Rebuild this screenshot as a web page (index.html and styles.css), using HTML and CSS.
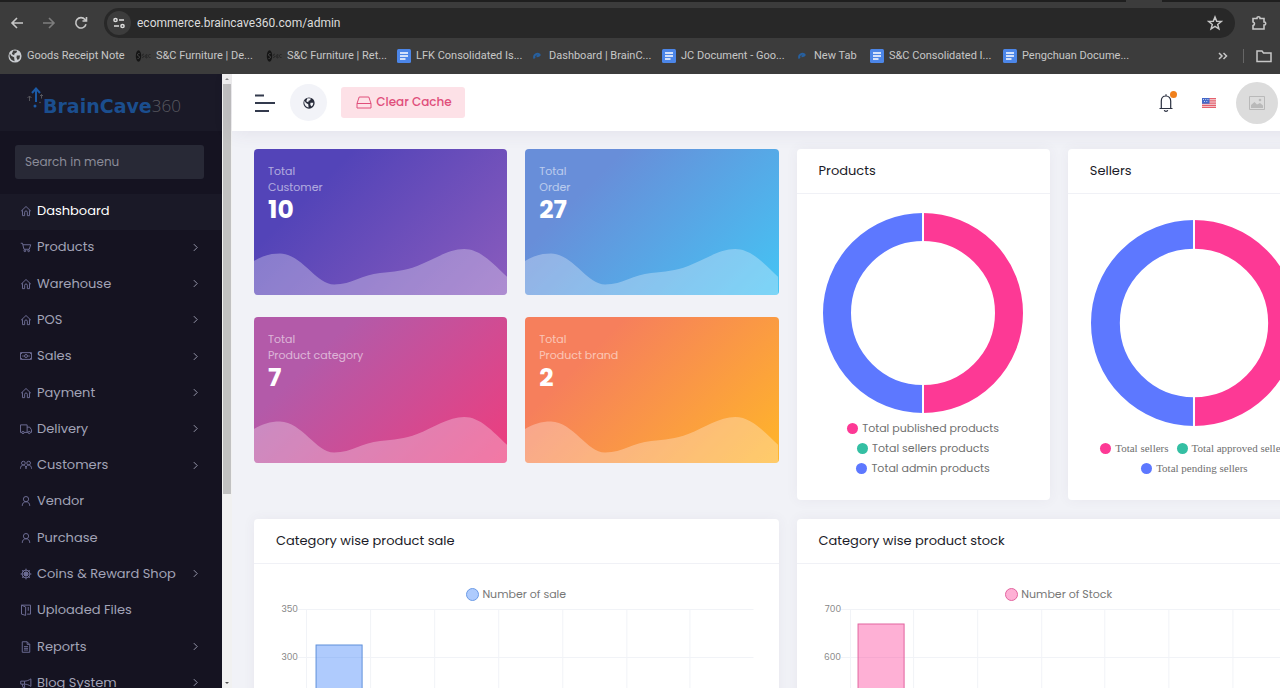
FILE: index.html
```html
<!DOCTYPE html>
<html lang="en">
<head>
<meta charset="utf-8">
<title>BrainCave360 Admin</title>
<link rel="stylesheet" href="styles.css">
</head>
<body>
<svg class="sprite" aria-hidden="true">
  <symbol id="home" viewBox="0 0 16 16"><path d="M1.5 8.2 8 2l6.500 6.200M3.300 7v7.200h2.900V9.600c0-1 .8-1.700 1.800-1.700s1.800.7 1.800 1.700v4.600h2.900V7"/></symbol>
  <symbol id="cart" viewBox="0 0 16 16"><path d="M1 3h2.300l2 8h7l2-6H4"/><circle cx="6.500" cy="13" r="1.200"/><circle cx="11.500" cy="13" r="1.200"/></symbol>
  <symbol id="cash" viewBox="0 0 16 16"><path d="M.7 3.500h14.600v9H.7zM.7 6 3 3.500M15.300 6 13 3.500M.7 10 3 12.500M15.300 10 13 12.500M3 8h2M11 8h2"/><circle cx="8" cy="8" r="2"/></symbol>
  <symbol id="truck" viewBox="0 0 16 16"><path d="M2.500 12.500H.7V2.500h8.800v10H5.500M9.500 5.500H13l2.300 3.500v3.500h-1.500M9.500 12.500h1.300"/><circle cx="4" cy="12.700" r="1.500"/><circle cx="12.300" cy="12.700" r="1.500"/></symbol>
  <symbol id="users" viewBox="0 0 16 16"><circle cx="4.500" cy="5.500" r="2.500"/><circle cx="11.500" cy="5.500" r="2.500"/><path d="M.6 13c0-3 1.500-5 3.900-5S8 10 8 13c0-3 1.200-5 3.500-5s3.900 2 3.900 5"/></symbol>
  <symbol id="user" viewBox="0 0 16 16"><circle cx="8" cy="5.500" r="3.500"/><path d="M3 14.500c0-3.500 2-5.500 5-5.500s5 2 5 5.500"/></symbol>
  <symbol id="wheel" viewBox="0 0 16 16"><circle cx="8" cy="8" r="5.300"/><circle cx="8" cy="8" r="2.200"/><path d="M8 .8v14.400M.8 8h14.400M2.900 2.900l10.200 10.200M13.100 2.900 2.900 13.100"/></symbol>
  <symbol id="files" viewBox="0 0 16 16"><path d="M2 1.500h12v12H9.500M2 1.500v12l5.500 1.700V4L2 1.500M11 4v5"/></symbol>
  <symbol id="report" viewBox="0 0 16 16"><path d="M3 1h6.500L13 4.500V15H3zM9.500 1v3.500H13M5.300 7.500h5.400M5.300 9.800h5.400M5.300 12h5.400"/></symbol>
  <symbol id="horn" viewBox="0 0 16 16"><path d="M1 5.500h5c3 0 5.500-1 8.500-3v10c-3-2-5.500-3-8.500-3H1zM6 5.500v4M3 9.500l1 4.500h2.500l-1-4.500"/></symbol>
  <symbol id="chev" viewBox="0 0 16 16"><path d="m5 2 6 6-6 6"/></symbol>
  <symbol id="globe" viewBox="0 0 16 16"><circle cx="8" cy="8" r="7.500" fill="currentColor" stroke="none"/><path class="land" stroke="none" d="M2 5 4 8l3 1.500.5 4.500C4.500 13.500 2 11 1.700 8zM6 1.800 10.500 1.900 9.500 4.300 7.500 5 7 7 4.300 5.800zM10 7.500 13.800 7.500 13 11 11 12.500 9.700 10z"/></symbol>
  <symbol id="doc" viewBox="0 0 14 14"><rect width="14" height="14" rx="1.500" fill="#4c86e8" stroke="none"/><path stroke="#fff" stroke-width="1.500" d="M3 4h8M3 7h8M3 10h5.500"/></symbol>
  <symbol id="swoosh" viewBox="0 0 14 14"><path stroke="#27609f" stroke-width="2" d="M4.500 9.500C3 6 7 3.500 9.500 5.500c.8 1-1 1.500-3 1.700"/></symbol>
  <symbol id="snc" viewBox="0 0 16 16"><ellipse cx="3.500" cy="8" rx="2.700" ry="5.800" fill="#151515" stroke="none"/><path stroke="#454545" d="M4.500 5.500C2 5 2 8 3.500 8s1.500 3-1 2.500"/><path stroke="#262626" d="M9 6.300c-2-.5-2 1.400-1 1.600s1 2-1 1.500M12 10c-3-.5-2-3-.5-3.500S10 9 12.500 9.500M15.500 6.500c-3-.5-3 3.500 0 3"/></symbol>
  <symbol id="wave" viewBox="0 0 253 49" preserveAspectRatio="none"><path fill="#fff" fill-opacity=".3" stroke="none" d="M0 15C8 10 16 7.500 26 7.500 48 8 62 38.500 80 38.500c18 0 28-10 46-11.500 14-1.500 24-2 37-7 17-6.500 31-17 47-17s28 14 43 28v18H0z"/></symbol>
</svg>

<header class="browser">
  <div class="tabstrip"><span class="tab"></span></div>
  <div class="toolbar">
    <button class="tool" aria-label="Back"><svg class="ico16" viewBox="0 0 16 16"><path d="M14 8H3M8 3 3 8l5 5"/></svg></button>
    <button class="tool dim" aria-label="Forward"><svg class="ico16" viewBox="0 0 16 16"><path d="M2 8h11M8 3l5 5-5 5"/></svg></button>
    <button class="tool" aria-label="Reload"><svg class="ico16" viewBox="0 0 16 16"><path d="M13 9.300A5.200 5.200 0 1 1 12 4.500l1.300 1.300M13.500 2v4h-4"/></svg></button>
    <div class="omnibox">
      <button class="site" aria-label="Site information"><svg class="ico14" viewBox="0 0 14 14"><circle cx="3.500" cy="4" r="1.600"/><path d="M7 4h5M2 10h5"/><circle cx="10.500" cy="10" r="1.600"/></svg></button>
      <input class="url" aria-label="Address" value="ecommerce.braincave360.com/admin">
      <button class="star" aria-label="Bookmark"><svg class="ico16" viewBox="0 0 16 16"><path d="m8 2 1.700 4.200 4.500.3-3.500 2.900 1.200 4.400L8 11.400l-3.900 2.400 1.200-4.400L1.800 6.500l4.500-.3z"/></svg></button>
    </div>
    <button class="tool ext" aria-label="Extensions"><svg class="ico16" viewBox="0 0 16 16"><path d="M2 3.500h4V2.800a1.500 1 0 0 1 3 0v.7h4V7h.4a1.300 1.500 0 0 1 0 3H13v4H2v-3.500c2-.5 2-3 0-3.500z"/></svg></button>
  </div>
  <nav class="bookmarks" aria-label="Bookmarks">
    <a href="#"><svg class="ico14 light"><use href="#globe"/></svg>Goods Receipt Note</a>
    <a href="#"><svg class="ico16"><use href="#snc"/></svg>S&amp;C Furniture | De...</a>
    <a href="#"><svg class="ico16"><use href="#snc"/></svg>S&amp;C Furniture | Ret...</a>
    <a href="#"><svg class="ico14"><use href="#doc"/></svg>LFK Consolidated Is...</a>
    <a href="#"><svg class="ico14"><use href="#swoosh"/></svg>Dashboard | BrainC...</a>
    <a href="#"><svg class="ico14"><use href="#doc"/></svg>JC Document - Goo...</a>
    <a href="#"><svg class="ico14"><use href="#swoosh"/></svg>New Tab</a>
    <a href="#"><svg class="ico14"><use href="#doc"/></svg>S&amp;C Consolidated I...</a>
    <a href="#"><svg class="ico14"><use href="#doc"/></svg>Pengchuan Docume...</a>
    <div class="more">
      <button class="tool small" aria-label="More bookmarks"><svg class="ico14" viewBox="0 0 14 14"><path d="m3 4 3 3-3 3M7.500 4l3 3-3 3"/></svg></button>
      <span class="rule"></span>
      <button class="tool small" aria-label="All bookmarks"><svg class="ico16" viewBox="0 0 16 16"><path d="M1 3h5l1.500 2H15v8.500H1z"/></svg></button>
    </div>
  </nav>
</header>

<div class="app">
  <aside class="sidebar">
    <a class="logo" href="#">
      <svg class="mark" viewBox="0 0 16 22"><path stroke="#1c5aa6" stroke-width="2" d="M9 15V2M5 6l4-4.500L13 6"/><circle cx="8" cy="19" r="1.500" fill="#1c5aa6" stroke="none"/><path stroke="#55555c" d="M2.500 14v-5M.5 11l2-2 2 2M14.500 11.500V7.500M13 9l1.500-1.500L16 9"/><circle cx="13" cy="15.500" r=".8" fill="#55555c" stroke="none"/></svg>
      <span class="brand">BrainCave</span><span class="num">360</span>
    </a>
    <input class="search" type="search" placeholder="Search in menu" aria-label="Search in menu">
    <ul class="menu">
      <li><a class="active" href="#"><svg class="mi"><use href="#home"/></svg>Dashboard</a></li>
      <li><a href="#"><svg class="mi"><use href="#cart"/></svg>Products<svg class="chev"><use href="#chev"/></svg></a></li>
      <li><a href="#"><svg class="mi"><use href="#home"/></svg>Warehouse<svg class="chev"><use href="#chev"/></svg></a></li>
      <li><a href="#"><svg class="mi"><use href="#home"/></svg>POS<svg class="chev"><use href="#chev"/></svg></a></li>
      <li><a href="#"><svg class="mi"><use href="#cash"/></svg>Sales<svg class="chev"><use href="#chev"/></svg></a></li>
      <li><a href="#"><svg class="mi"><use href="#home"/></svg>Payment<svg class="chev"><use href="#chev"/></svg></a></li>
      <li><a href="#"><svg class="mi"><use href="#truck"/></svg>Delivery<svg class="chev"><use href="#chev"/></svg></a></li>
      <li><a href="#"><svg class="mi"><use href="#users"/></svg>Customers<svg class="chev"><use href="#chev"/></svg></a></li>
      <li><a href="#"><svg class="mi"><use href="#user"/></svg>Vendor</a></li>
      <li><a href="#"><svg class="mi"><use href="#user"/></svg>Purchase</a></li>
      <li><a href="#"><svg class="mi"><use href="#wheel"/></svg>Coins &amp; Reward Shop<svg class="chev"><use href="#chev"/></svg></a></li>
      <li><a href="#"><svg class="mi"><use href="#files"/></svg>Uploaded Files</a></li>
      <li><a href="#"><svg class="mi"><use href="#report"/></svg>Reports<svg class="chev"><use href="#chev"/></svg></a></li>
      <li><a href="#"><svg class="mi"><use href="#horn"/></svg>Blog System<svg class="chev"><use href="#chev"/></svg></a></li>
    </ul>
  </aside>
  <div class="scrollbar" aria-hidden="true">
    <svg class="arrow" viewBox="0 0 10 10"><path d="M3 6h4L5 4z"/></svg>
    <div class="track"><div class="thumb"></div></div>
    <svg class="arrow dark" viewBox="0 0 10 10"><path d="M3 4h4L5 6z"/></svg>
  </div>

  <main class="main">
    <div class="topbar">
      <button class="burger" aria-label="Toggle menu"><svg viewBox="0 0 22 18"><path d="M1 1.500h9M1 9h20M1 17h14"/></svg></button>
      <button class="round" aria-label="Browse website"><svg class="ico12"><use href="#globe"/></svg></button>
      <button class="clear"><svg class="ico16" viewBox="0 0 16 14"><path d="M1 8.500 3.200 2h9.600L15 8.500V13H1zM1 8.500h14"/></svg>Clear Cache</button>
      <div class="right">
        <button class="bell" aria-label="Notifications"><svg viewBox="0 0 16 20"><path d="M1.500 15.500h13M3.300 15.500V8c0-3 2-5 4.700-5s4.700 2 4.700 5v7.500M8 3V1.300M6.300 17.200c.3 1.600 3.100 1.600 3.400 0"/></svg><span class="dot"></span></button>
        <button class="flag" aria-label="Language: English"><svg viewBox="0 0 14 10"><path fill="#f3dfe3" d="M0 0h14v10H0z"/><path fill="#e5606c" d="M0 0h14v1.200H0zM0 2.300h14v1.200H0zM0 4.500h14v1.200H0zM0 6.700h14v1.200H0zM0 8.800h14V10H0z"/><path fill="#4468c8" d="M0 0h7.500v5.700H0z"/><path fill="#c4d1f2" d="M1 1h1v1H1zM3.200 1h1v1h-1zM5.400 1h1v1h-1zM2 3h1v1H2zM4.300 3h1v1h-1z"/></svg></button>
        <button class="avatar" aria-label="Account"><svg viewBox="0 0 16 14"><path stroke="#b9b9b9" d="M.5.5h15v13H.5z"/><path fill="#b9b9b9" d="M2 12V9l3.500-3 2.500 2.500L11 7l3 2.500V12z"/><circle cx="11" cy="4" r="1.300" fill="#b9b9b9"/></svg></button>
      </div>
    </div>

    <div class="dash">
      <section class="stats">
        <article class="stat customer"><p>Total<br>Customer</p><strong>10</strong><svg class="wave"><use href="#wave"/></svg></article>
        <article class="stat order"><p>Total<br>Order</p><strong>27</strong><svg class="wave"><use href="#wave"/></svg></article>
        <article class="stat category"><p>Total<br>Product category</p><strong>7</strong><svg class="wave"><use href="#wave"/></svg></article>
        <article class="stat brandcard"><p>Total<br>Product brand</p><strong>2</strong><svg class="wave"><use href="#wave"/></svg></article>
      </section>
      <section class="donuts">
        <article class="card">
          <h2>Products</h2>
          <svg class="donut" viewBox="0 0 200 200"><circle class="pink" cx="100" cy="100" r="86" stroke-width="28" pathLength="100" stroke-dasharray="50 50" stroke-dashoffset="25"/><circle class="blue" cx="100" cy="100" r="86" stroke-width="28" pathLength="100" stroke-dasharray="50 50" stroke-dashoffset="75"/><path class="split" d="M100 0v30M100 170v30"/></svg>
          <ul class="legend stack">
            <li><i class="k pinkbg"></i>Total published products</li>
            <li><i class="k greenbg"></i>Total sellers products</li>
            <li><i class="k bluebg"></i>Total admin products</li>
          </ul>
        </article>
        <article class="card">
          <h2>Sellers</h2>
          <svg class="donut big" viewBox="0 0 200 200"><circle class="pink" cx="100" cy="100" r="86" stroke-width="28" pathLength="100" stroke-dasharray="50 50" stroke-dashoffset="25"/><circle class="blue" cx="100" cy="100" r="86" stroke-width="28" pathLength="100" stroke-dasharray="50 50" stroke-dashoffset="75"/><path class="split" d="M100 0v30M100 170v30"/></svg>
          <ul class="legend serif">
            <li><i class="k pinkbg"></i>Total sellers</li>
            <li><i class="k greenbg"></i>Total approved sellers</li>
            <li><i class="k bluebg"></i>Total pending sellers</li>
          </ul>
        </article>
      </section>

      <section class="card chart">
        <h2>Category wise product sale</h2>
        <p class="key"><i class="ring sale"></i>Number of sale</p>
        <svg class="plot" viewBox="0 0 480 160"><path class="grid" d="M22 6.500h455M22 54.500h455M22 102.500h455M22 150.500h455M30.500 6v154M94.500 6v154M158.500 6v154M222.500 6v154M286.500 6v154M350.500 6v154M413.500 6v154"/><path class="bar sale" d="M40 160V42h46v118"/><text x="22" y="9">350</text><text x="22" y="57">300</text></svg>
      </section>
      <section class="card chart">
        <h2>Category wise product stock</h2>
        <p class="key"><i class="ring stock"></i>Number of Stock</p>
        <svg class="plot" viewBox="0 0 480 160"><path class="grid" d="M22 6.500h458M22 54.500h458M22 102.500h458M22 150.500h458M31.500 6v154M94.500 6v154M158.500 6v154M222.500 6v154M285.500 6v154M349.500 6v154M413.500 6v154"/><path class="bar stock" d="M39 160V21h46v139"/><text x="22" y="9">700</text><text x="22" y="57">600</text></svg>
      </section>
    </div>
  </main>
</div>
</body>
</html>
```

FILE: styles.css
```css
* { box-sizing: border-box; }
body { margin: 0; height: 100vh; overflow: hidden; display: flex; flex-direction: column; font: 13px/16px Poppins, Inter, sans-serif; background: #f1f2f7; }
button { border: 0; padding: 0; background: none; font: inherit; color: inherit; display: flex; align-items: center; justify-content: center; cursor: pointer; flex: none; }
a { color: inherit; text-decoration: none; }
ul { list-style: none; margin: 0; padding: 0; }
p, h2 { margin: 0; font-weight: 400; }
svg { fill: none; stroke: currentColor; flex: none; }
.sprite { display: none; }
.ico12 { width: 12px; height: 12px; }
.ico14 { width: 14px; height: 14px; }
.ico16 { width: 16px; height: 16px; }

/* Browser chrome */
.browser { flex: none; background: #3c3c3c; color: #c7c7c7; font-family: Roboto, sans-serif; }
.tabstrip { height: 2px; background: #1f1f1f; display: flex; justify-content: flex-end; padding-right: 118px; }
.tab { width: 36px; background: #3c3c3c; }
.toolbar { display: flex; align-items: center; padding: 6px 0 0 8px; }
.tool { width: 32px; height: 30px; padding-right: 14px; }
.tool svg { stroke-width: 1.6; }
.tool.dim { color: #7d7d7d; }
.tool.ext { width: 45px; padding: 0 0 0 3px; }
.omnibox { flex: 1; height: 30px; border-radius: 15px; background: #282828; display: flex; align-items: center; padding: 0 12px 0 3px; }
.site { width: 24px; height: 24px; border-radius: 12px; background: #3c3c3c; color: #dedede; }
.site svg, .star svg { stroke-width: 1.5; }
.url { flex: 1; min-width: 0; border: 0; background: none; outline: 0; padding: 0 6px; color: #dcdcdc; font: 12px/20px Roboto, sans-serif; }
.bookmarks { display: grid; grid-template-columns: 127px 131px 131px 133px 132px 133px 75px 133px 160px 1fr; align-items: center; height: 36px; padding-left: 8px; font-size: 11px; white-space: nowrap; }
.bookmarks a { display: flex; align-items: center; gap: 5px; }
.light { color: #c9ccd0; }
.land { fill: var(--land, #3c3c3c); }
.more { display: flex; justify-content: flex-end; align-items: center; gap: 12px; padding-right: 8px; }
.tool.small { width: 16px; padding: 0; }
.tool.small svg { stroke-width: 1.5; }
.rule { width: 1px; height: 14px; background: #666; }

/* App frame */
.app { flex: 1; min-height: 0; display: flex; overflow: hidden; }
.sidebar { flex: none; width: 222px; background: #151321; color: #a2a3b7; overflow: hidden; display: flex; flex-direction: column; }
.logo { flex: none; height: 57px; background: #1a1927; display: flex; align-items: center; padding: 0 0 0 27px; }
.mark { width: 16px; height: 22px; margin-bottom: 10px; }
.brand { font: bold 19px/20px "DejaVu Sans", sans-serif; color: #1b4e8e; margin-top: 6px; }
.num { font: 300 17px/20px "Open Sans", sans-serif; color: #5b5b62; margin-top: 6px; }
.search { flex: none; margin: 14px 18px 15px 15px; height: 34px; border: 0; border-radius: 3px; background: #282936; padding: 0 10px; font: 12px/16px Poppins, Inter, sans-serif; color: #ccc; }
.search::placeholder { color: #8a8b98; }
.menu { flex: none; height: 508px; display: grid; grid-auto-rows: 1fr; }
.menu a { height: 100%; display: flex; align-items: center; gap: 5px; padding: 0 22px 2px 20px; }
.menu a.active { background: #1a1927; color: #fff; }
.mi { width: 12px; height: 12px; color: #6d6d94; stroke-width: 1.3; }
.chev { width: 9px; height: 9px; margin-left: auto; stroke-width: 1.6; }
.scrollbar { flex: none; width: 10px; background: #f1f1f1; display: flex; flex-direction: column; }
.arrow { width: 10px; height: 10px; fill: #8b8b8b; stroke: none; }
.arrow.dark { fill: #505050; }
.track { flex: 1; padding: 0 1px; }
.thumb { height: 69%; background: #c1c1c1; }
.main { flex: 1 0 1111px; }

/* Top bar */
.topbar { height: 57px; background: #fff; display: flex; align-items: center; padding: 0 65px 0 22px; box-shadow: 0 0 20px rgba(82, 63, 105, .1); position: relative; }
.burger svg { width: 22px; height: 18px; stroke: #333a4d; stroke-width: 2; }
.round { width: 37px; height: 37px; border-radius: 50%; background: #f2f3f8; margin: 0 14px; color: #272b3a; --land: #f2f3f8; }
.clear { width: 124px; height: 31px; gap: 4px; padding: 0 0 2px 2px; border-radius: 3px; background: #fde1e7; color: #e04e7b; font-size: 12px; font-weight: 500; }
.right { margin-left: auto; display: flex; align-items: center; gap: 26px; }
.bell { position: relative; }
.bell svg { width: 16px; height: 20px; stroke: #2b3040; stroke-width: 1.2; }
.dot { position: absolute; right: -3px; top: -2px; width: 7px; height: 7px; border-radius: 50%; background: #f0801c; }
.flag { margin-left: 2px; }
.flag svg { width: 14px; height: 10px; stroke: none; }
.avatar { width: 42px; height: 42px; border-radius: 50%; background: #dcdcdc; margin-left: -6px; }
.avatar svg { width: 16px; height: 14px; stroke: none; }

/* Dashboard */
.dash { display: grid; grid-template-columns: 1fr 1fr; gap: 19px 18px; padding: 18px 22px; }
.stats, .donuts { display: grid; grid-template-columns: 1fr 1fr; column-gap: 18px; }
.stats { row-gap: 22px; align-content: start; }
.stat { position: relative; height: 146px; border-radius: 4px; overflow: hidden; padding: 14px; color: #fff; }
.stat p { font-size: 11px; opacity: .55; }
.stat strong { display: block; font-size: 25px; line-height: 30px; font-weight: 700; }
.customer { background: linear-gradient(135deg, #5344b8 25%, #8b5cbd); }
.order { background: linear-gradient(135deg, #688ed9 25%, #44c4f4); }
.category { background: linear-gradient(135deg, #b35aa9 25%, #ee3d7d); }
.brandcard { background: linear-gradient(135deg, #f67f5c 25%, #ffb629); }
.wave { position: absolute; left: 0; bottom: 0; width: 100%; height: 49px; }
.card { background: #fff; border-radius: 4px; box-shadow: 0 0 13px rgba(82, 63, 105, .06); overflow: hidden; display: flex; flex-direction: column; align-items: center; }
.donuts .card { min-height: 351px; }
.card h2 { align-self: stretch; height: 45px; line-height: 44px; padding: 0 22px; border-bottom: 1px solid #f0f1f6; color: #1b1b28; font-size: 13px; }
.donut { width: 200px; height: 200px; margin: 19px 0 5px; }
.donut.big { width: 206px; height: 206px; margin: 26px 0 12px; }
.pink { stroke: #fd3995; }
.blue { stroke: #5d78ff; }
.split { stroke: #fff; stroke-width: 2; }
.legend { display: flex; flex-wrap: wrap; justify-content: center; column-gap: 8px; color: #6f6f6f; font-size: 11px; line-height: 20px; white-space: nowrap; }
.legend li { display: flex; align-items: center; gap: 4px; }
.legend.stack { flex-direction: column; align-items: center; }
.legend.serif { font-family: "Liberation Serif", serif; }
.k { width: 11px; height: 11px; border-radius: 50%; }
.pinkbg { background: #fd3995; }
.greenbg { background: #34bfa3; }
.bluebg { background: #5d78ff; }
.key { display: flex; align-items: center; gap: 3px; height: 18px; margin-top: 21px; color: #777; font-size: 11px; }
.ring { width: 13px; height: 13px; border-radius: 50%; border: 1px solid; }
.ring.sale { background: #aecbfd; border-color: #6c9be6; }
.ring.stock { background: #feb0d5; border-color: #e2649f; }
.plot { width: calc(100% - 44px); }
.plot text { fill: #858585; stroke: none; font-size: 9px; text-anchor: end; }
.grid { stroke: #f1f3f7; }
.bar.sale { fill: rgba(55, 125, 251, .4); stroke: #5f90da; }
.bar.stock { fill: rgba(253, 57, 149, .4); stroke: #e2649f; }
```
